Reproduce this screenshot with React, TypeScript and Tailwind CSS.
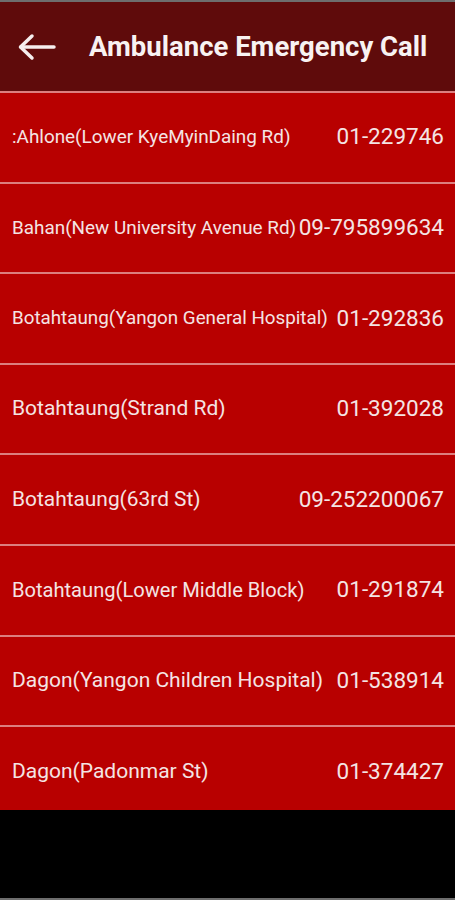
import React from "react";

const rows: { name: string; phone: string; size: string }[] = [
  { name: ":Ahlone(Lower KyeMyinDaing Rd)", phone: "01-229746", size: "text-[18.9px]" },
  { name: "Bahan(New University Avenue Rd)", phone: "09-795899634", size: "text-[18.9px]" },
  { name: "Botahtaung(Yangon General Hospital)", phone: "01-292836", size: "text-[18.8px]" },
  { name: "Botahtaung(Strand Rd)", phone: "01-392028", size: "text-[21px]" },
  { name: "Botahtaung(63rd St)", phone: "09-252200067", size: "text-[20.9px]" },
  { name: "Botahtaung(Lower Middle Block)", phone: "01-291874", size: "text-[20.1px]" },
  { name: "Dagon(Yangon Children Hospital)", phone: "01-538914", size: "text-[21px]" },
  { name: "Dagon(Padonmar St)", phone: "01-374427", size: "text-[21px]" },
];

export default function App() {
  return (
    <div
      className="flex h-[900px] w-[455px] flex-col overflow-hidden bg-black"
      style={{ fontFamily: "Roboto, 'Noto Sans', sans-serif" }}
    >
      <div className="h-[2px] bg-[#6e6e6e]" />
      <header className="flex h-[89px] items-center bg-[#5f0b0b] pl-[17px]">
        <svg width="40" height="28" viewBox="0 0 40 28" fill="none" stroke="#f6eeee" strokeWidth="3.5" strokeLinecap="round" strokeLinejoin="round">
          <path d="M37 14H4" />
          <path d="M15 3L3.5 14L15 25" />
        </svg>
        <h1 className="ml-[32px] text-[27.5px] font-bold text-[#f8f2f2]">Ambulance Emergency Call</h1>
      </header>
      <div className="flex-1 overflow-hidden bg-[#b80000]">
        {rows.map((r) => (
          <div
            key={r.name}
            className="flex h-[90.6px] items-center justify-between border-t-2 border-[#dc7f7f] pl-[12px] pr-[11px] text-[#f4e4e4]"
          >
            <span className={`${r.size} whitespace-nowrap`}>{r.name}</span>
            <span className="whitespace-nowrap text-[22.5px]">{r.phone}</span>
          </div>
        ))}
      </div>
      <div className="h-[88px] bg-black" />
      <div className="h-[2px] bg-[#6e6e6e]" />
    </div>
  );
}
